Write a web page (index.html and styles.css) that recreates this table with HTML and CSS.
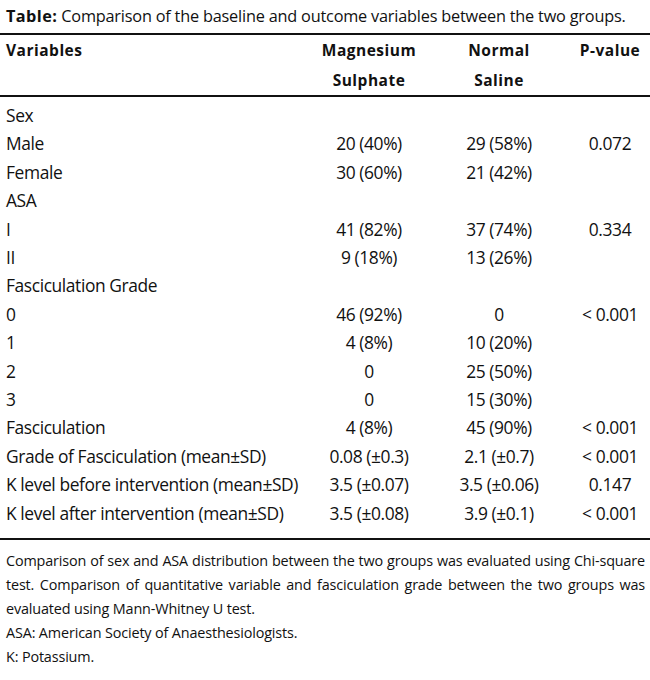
FILE: index.html
```html
<!DOCTYPE html>
<html lang="en">
<head>
<meta charset="utf-8">
<title>Table</title>
<link rel="stylesheet" href="styles.css">
</head>
<body>
<div class="page">
  <p class="caption"><b>Table:</b> Comparison of the baseline and outcome variables between the two groups.</p>
  <table class="data">
    <colgroup>
      <col class="c-var"><col class="c-mg"><col class="c-ns"><col class="c-p">
    </colgroup>
    <thead>
      <tr>
        <th class="var">Variables</th>
        <th>Magnesium<br>Sulphate</th>
        <th>Normal<br>Saline</th>
        <th>P-value</th>
      </tr>
    </thead>
    <tbody>
      <tr><td class="var">Sex</td><td></td><td></td><td></td></tr>
      <tr><td class="var">Male</td><td>20 (40%)</td><td>29 (58%)</td><td>0.072</td></tr>
      <tr><td class="var">Female</td><td>30 (60%)</td><td>21 (42%)</td><td></td></tr>
      <tr><td class="var">ASA</td><td></td><td></td><td></td></tr>
      <tr><td class="var">I</td><td>41 (82%)</td><td>37 (74%)</td><td>0.334</td></tr>
      <tr><td class="var">II</td><td>9 (18%)</td><td>13 (26%)</td><td></td></tr>
      <tr><td class="var">Fasciculation Grade</td><td></td><td></td><td></td></tr>
      <tr><td class="var">0</td><td>46 (92%)</td><td>0</td><td>&lt; 0.001</td></tr>
      <tr><td class="var">1</td><td>4 (8%)</td><td>10 (20%)</td><td></td></tr>
      <tr><td class="var">2</td><td>0</td><td>25 (50%)</td><td></td></tr>
      <tr><td class="var">3</td><td>0</td><td>15 (30%)</td><td></td></tr>
      <tr><td class="var">Fasciculation</td><td>4 (8%)</td><td>45 (90%)</td><td>&lt; 0.001</td></tr>
      <tr><td class="var">Grade of Fasciculation (mean±SD)</td><td>0.08 (±0.3)</td><td>2.1 (±0.7)</td><td>&lt; 0.001</td></tr>
      <tr><td class="var">K level before intervention (mean±SD)</td><td>3.5 (±0.07)</td><td>3.5 (±0.06)</td><td>0.147</td></tr>
      <tr><td class="var">K level after intervention (mean±SD)</td><td>3.5 (±0.08)</td><td>3.9 (±0.1)</td><td>&lt; 0.001</td></tr>
    </tbody>
  </table>
  <div class="notes">
    <p class="para">
      <span class="jl">Comparison of sex and ASA distribution between the two groups was evaluated using Chi-square</span>
      <span class="jl">test. Comparison of quantitative variable and fasciculation grade between the two groups was</span>
      <span class="ln">evaluated using Mann-Whitney U test.</span>
    </p>
    <p class="para">ASA: American Society of Anaesthesiologists.</p>
    <p class="para">K: Potassium.</p>
  </div>
</div>
</body>
</html>
```

FILE: styles.css
```css
html, body {
  margin: 0;
  padding: 0;
  background: #ffffff;
}

body {
  font-family: "Open Sans", "Noto Sans", "DejaVu Sans Condensed", sans-serif;
  color: #111111;
}

.page {
  width: 650px;
  padding-top: 4px;
}

.caption {
  margin: 0 0 4px 0;
  padding-left: 6px;
  font-size: 16.3px;
  letter-spacing: -0.2px;
  line-height: 25px;
  white-space: nowrap;
}

.caption b {
  font-weight: bold;
  letter-spacing: 0.4px;
}

.data {
  width: 650px;
  border-collapse: collapse;
  table-layout: fixed;
}

.c-var { width: 310px; }
.c-mg { width: 118px; }
.c-ns { width: 142px; }
.c-p { width: 80px; }

.data thead tr {
  border-top: 2px solid #111;
  border-bottom: 2px solid #111;
}

.data th {
  font-weight: bold;
  font-size: 15.5px;
  letter-spacing: 0.5px;
  line-height: 30px;
  text-align: center;
  vertical-align: top;
  padding: 0;
}

.data th.var {
  text-align: left;
  padding-left: 6px;
}

.data tbody tr:last-child {
  border-bottom: 2px solid #111;
}

.data td {
  font-size: 17.4px;
  letter-spacing: -0.4px;
  line-height: 28.4px;
  padding: 0;
  text-align: center;
  white-space: nowrap;
}

.data td.var {
  text-align: left;
  padding-left: 6px;
}

.data tbody tr:first-child td {
  padding-top: 4px;
}

.data tbody tr:last-child td {
  padding-bottom: 11px;
}

.notes {
  margin-top: 9px;
  padding: 0 5px 0 6px;
  font-size: 14.4px;
  letter-spacing: -0.15px;
  line-height: 24px;
}

.para {
  margin: 0;
}

.jl {
  display: block;
  text-align: justify;
  text-align-last: justify;
  white-space: nowrap;
}

.ln {
  display: block;
}
```
